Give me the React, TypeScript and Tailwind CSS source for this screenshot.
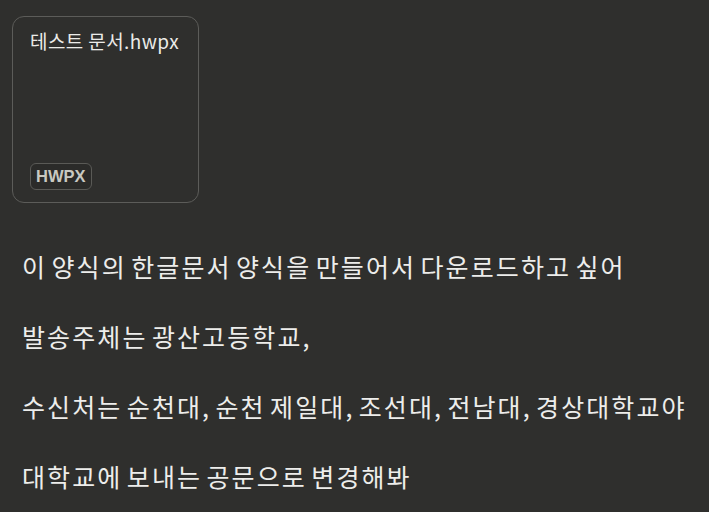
const lines = [
  "이 양식의 한글문서 양식을 만들어서 다운로드하고 싶어",
  "발송주체는 광산고등학교,",
  "수신처는 순천대, 순천 제일대, 조선대, 전남대, 경상대학교야",
  "대학교에 보내는 공문으로 변경해봐",
];

// commas sit tight to the word before them, with a normal gap after
function Line({ text }: { text: string }) {
  const parts = text.split(",");
  return (
    <p className="text-[25px] leading-[35px] tracking-[2.1px] text-[#ededeb] [word-spacing:-3.3px]">
      {parts.map((p, i) => (
        <span key={i}>
          {p}
          {i < parts.length - 1 && <span className="tracking-[-1px] mr-[3px]">,</span>}
        </span>
      ))}
    </p>
  );
}

export default function App() {
  return (
    <div
      className="min-h-screen w-full bg-[#2f2f2d] pl-[12px] pt-[16px]"
      style={{ fontFamily: '"Noto Sans CJK KR", "Noto Sans", sans-serif' }}
    >
      <div className="flex h-[187px] w-[187px] flex-col justify-between rounded-[12px] border border-[#5c5c59] px-[17px] pb-[12px] pt-[11px]">
        <div className="text-[19px] leading-[26px] tracking-[0.4px] text-[#ebebe8]">테스트 문서.hwpx</div>
        <div className="self-start rounded-[6px] border border-[#5a5a56] bg-[#2b2b29] px-[5px] py-[3px]">
          <span
            className="block text-[16.5px] font-bold leading-[19px] text-[#c9c9c1]"
            style={{ fontFamily: '"Liberation Sans", Arial, sans-serif' }}
          >
            HWPX
          </span>
        </div>
      </div>
      <div className="ml-[10px] mt-[46px] flex flex-col gap-[35px]">
        {lines.map((l) => (
          <Line key={l} text={l} />
        ))}
      </div>
    </div>
  );
}
